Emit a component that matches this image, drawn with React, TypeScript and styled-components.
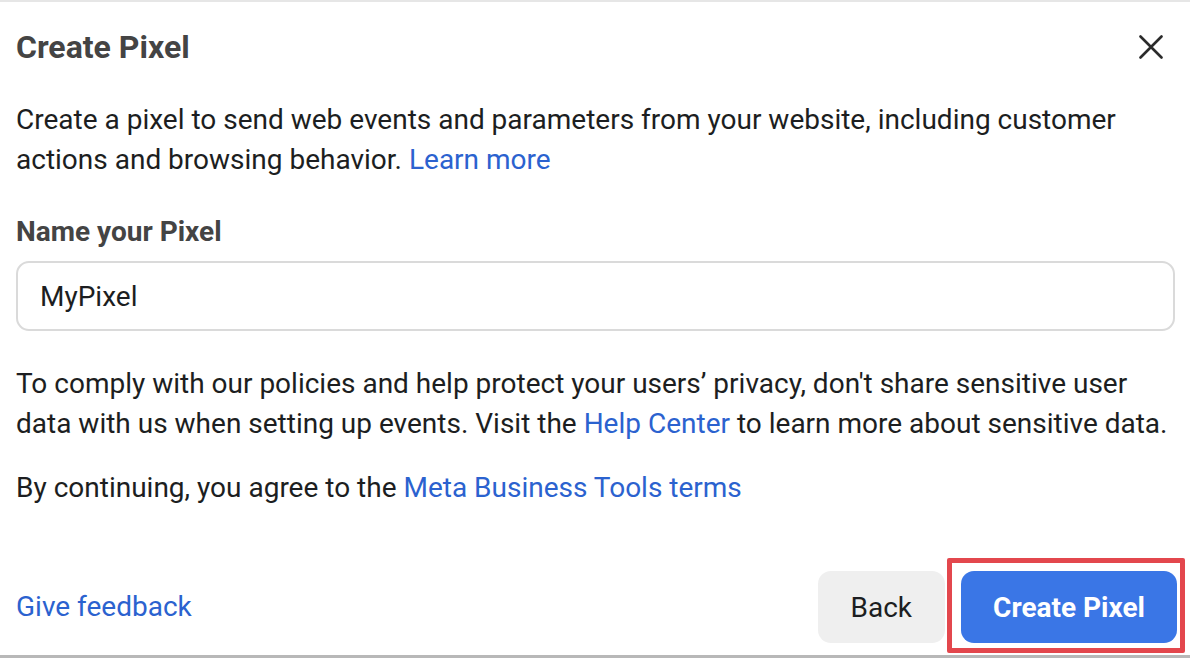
import React from "react";
import styled, { createGlobalStyle } from "styled-components";

const Global = createGlobalStyle`
  html, body { margin: 0; padding: 0; background: #fff; }
  body { font-family: Roboto, "Noto Sans", Arial, sans-serif; }
  * { box-sizing: border-box; }
`;

const Dialog = styled.div`
  width: 1190px;
  height: 658px;
  border-top: 2px solid #e6e6e6;
  border-bottom: 3px solid #b8b8b8;
  display: flex;
  flex-direction: column;
  padding: 0 15px 0 16px;
  color: #1c1e21;
  overflow: hidden;
`;

const Header = styled.div`
  height: 90px;
  display: flex;
  align-items: center;
  justify-content: space-between;
  margin-bottom: 8px;
`;

const Title = styled.h1`
  margin: 0;
  font-size: 32px;
  line-height: 38px;
  font-weight: 700;
  color: #444444;
`;

const CloseButton = styled.button`
  border: none;
  background: transparent;
  padding: 0;
  width: 26px;
  height: 26px;
  margin-right: 11px;
  display: flex;
  align-items: center;
  justify-content: center;
  cursor: pointer;
`;

const Paragraph = styled.p<{ $mt?: number }>`
  margin: ${(p) => p.$mt ?? 0}px 0 0;
  font-size: 28px;
  line-height: 40px;
  color: #1c1e21;
`;

const Link = styled.a`
  color: #2b62cf;
  text-decoration: none;
`;

const Label = styled.div`
  margin-top: 34px;
  font-size: 28px;
  line-height: 36px;
  font-weight: 700;
  color: #444444;
`;

const Input = styled.input`
  margin-top: 11px;
  width: 100%;
  height: 70px;
  border: 2px solid #dadada;
  border-radius: 13px;
  padding: 0 22px;
  font-family: inherit;
  font-size: 28px;
  color: #1c1e21;
  outline: none;
  background: #fff;
`;

const Footer = styled.div`
  margin-top: auto;
  margin-bottom: 12px;
  display: flex;
  align-items: center;
  justify-content: space-between;
  margin-right: -2px;
`;

const Actions = styled.div`
  display: flex;
  align-items: center;
  gap: 16px;
`;

const Button = styled.button<{ $primary?: boolean }>`
  height: 72px;
  border: none;
  border-radius: 13px;
  font-family: inherit;
  font-size: 28px;
  padding: 0 ${(p) => (p.$primary ? 32 : 33)}px;
  font-weight: ${(p) => (p.$primary ? 700 : 400)};
  background: ${(p) => (p.$primary ? "#3a76e6" : "#efefef")};
  color: ${(p) => (p.$primary ? "#ffffff" : "#1c1e21")};
  cursor: pointer;
`;

const Highlight = styled.div`
  position: relative;
  &::after {
    content: "";
    position: absolute;
    top: -13px;
    left: -14px;
    right: -8px;
    bottom: -10px;
    border: 5px solid #e3474d;
    border-radius: 2px;
    pointer-events: none;
  }
`;

export default function App() {
  return (
    <>
      <Global />
      <Dialog>
        <Header>
          <Title>Create Pixel</Title>
          <CloseButton aria-label="Close">
            <svg width="24" height="24" viewBox="0 0 24 24">
              <path
                d="M1.5 1.5 L22.5 22.5 M22.5 1.5 L1.5 22.5"
                stroke="#2b2b2b"
                strokeWidth="2.6"
                strokeLinecap="round"
              />
            </svg>
          </CloseButton>
        </Header>
        <Paragraph>
          Create a pixel to send web events and parameters from your website, including customer
          actions and browsing behavior. <Link href="#">Learn more</Link>
        </Paragraph>
        <Label>Name your Pixel</Label>
        <Input defaultValue="MyPixel" />
        <Paragraph $mt={33}>
          To comply with our policies and help protect your users’ privacy, don't share sensitive user
          data with us when setting up events. Visit the <Link href="#">Help Center</Link> to learn
          more about sensitive data.
        </Paragraph>
        <Paragraph $mt={24}>
          By continuing, you agree to the <Link href="#">Meta Business Tools terms</Link>
        </Paragraph>
        <Footer>
          <Paragraph>
            <Link href="#">Give feedback</Link>
          </Paragraph>
          <Actions>
            <Button>Back</Button>
            <Highlight>
              <Button $primary>Create Pixel</Button>
            </Highlight>
          </Actions>
        </Footer>
      </Dialog>
    </>
  );
}
